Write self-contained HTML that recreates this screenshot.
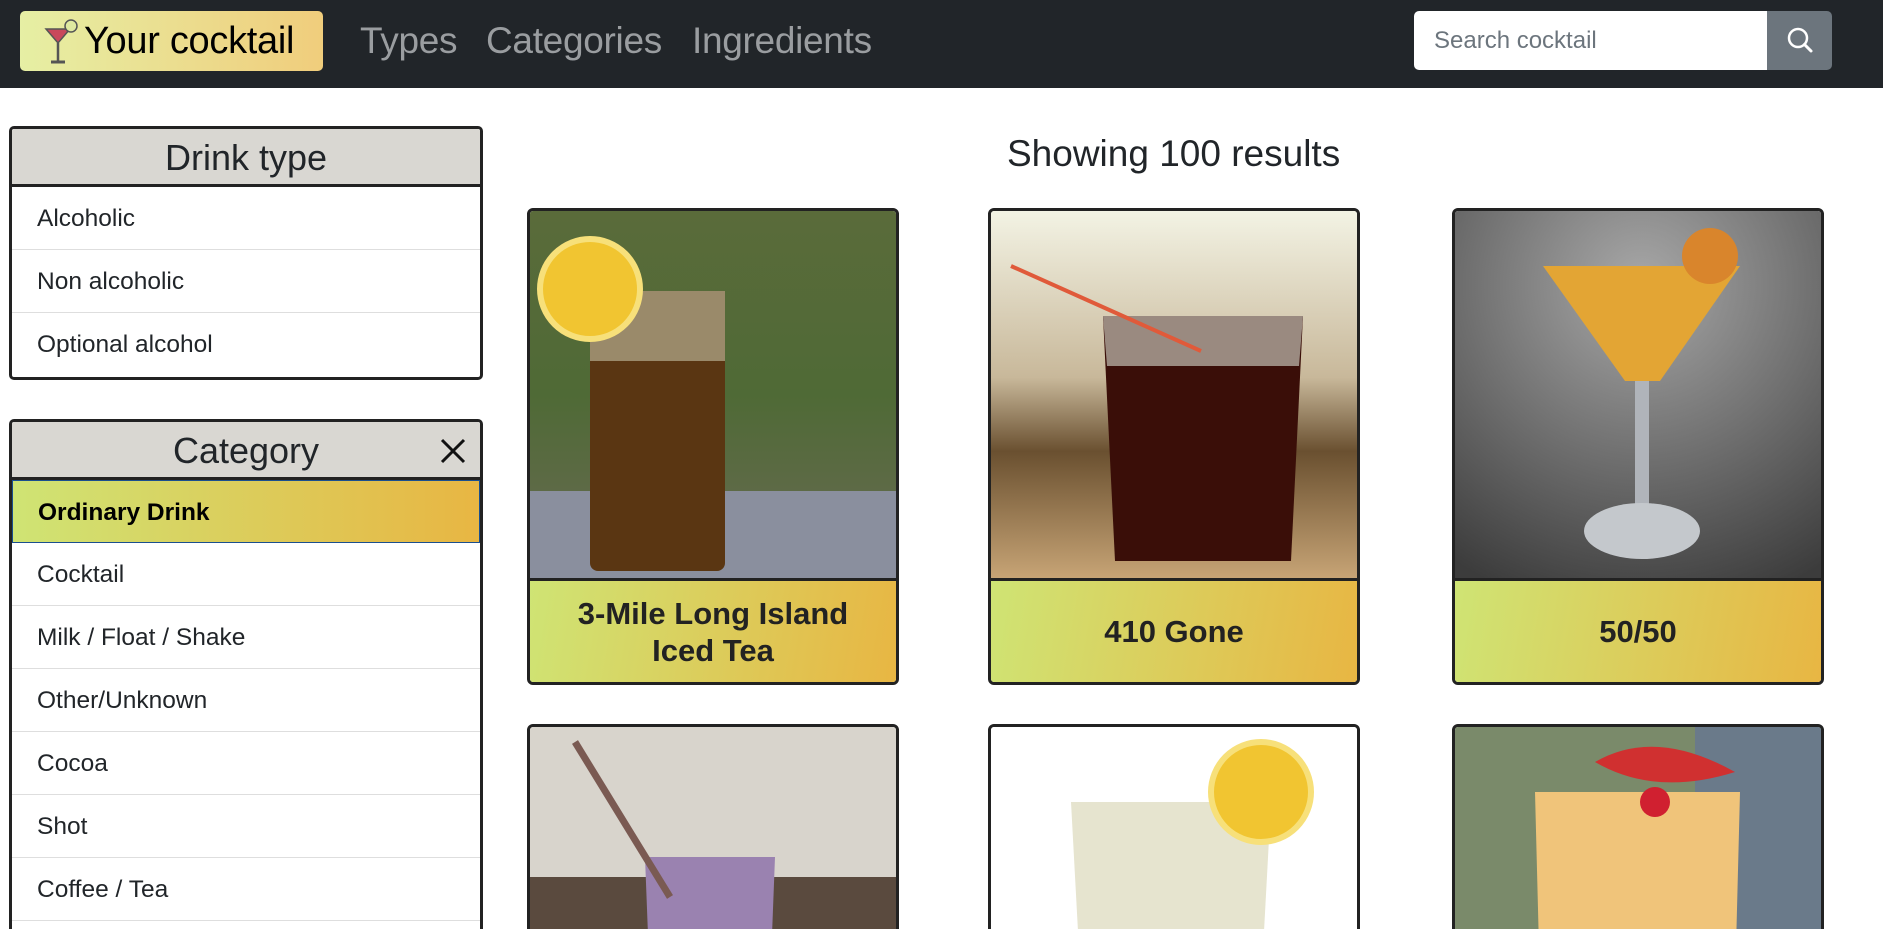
<!DOCTYPE html>
<html style="width:1883px;height:929px;overflow:hidden"><head><meta charset="utf-8"><style>
*{box-sizing:border-box;margin:0;padding:0}
html,body{overflow:hidden}
body{width:1883px;height:929px;overflow:hidden;background:#fff;font-family:"Liberation Sans",Arial,sans-serif;color:#212529;position:relative}
.nav{position:absolute;left:0;top:0;width:1883px;height:88px;background:#212529}
.brand{position:absolute;left:20px;top:11px;width:303px;height:60px;border-radius:5px;background:linear-gradient(90deg,#e6efa4,#f0cd7c);font-size:38px;color:#000;line-height:60px;padding-left:64px;letter-spacing:-0.3px;white-space:nowrap}
.brand svg{position:absolute;left:24px;top:8px}
.nl{position:absolute;top:16px;font-size:37px;color:#9a9da0;line-height:50px;letter-spacing:-0.3px}
.search{position:absolute;left:1414px;top:11px;width:353px;height:59px;background:#fff;border-radius:5px 0 0 5px;font-size:24px;color:#6c757d;line-height:59px;padding-left:20px}
.sbtn{position:absolute;left:1767px;top:11px;width:65px;height:59px;background:#6c757d;border-radius:0 5px 5px 0}
.panel{position:absolute;left:9px;width:474px;border:3px solid #222;border-radius:5px;background:#fff;overflow:hidden}
.ph{height:58px;background:#d9d7d2;border-bottom:3px solid #222;text-align:center;font-size:36px;line-height:58px;position:relative}
.it{height:63px;border-bottom:1px solid #dedede;font-size:24.5px;line-height:63px;padding-left:25px}
.it:last-child{border-bottom:none}
.sel{background:linear-gradient(90deg,#cfe474,#e8b643);font-weight:bold;color:#000;border:1px solid #1a4f8f;height:63px}
.title{position:absolute;left:1007px;top:133px;font-size:37px}
.card{position:absolute;width:372px;border:3px solid #222;border-radius:6px;overflow:hidden;background:#fff}
.img{height:370px;border-bottom:3px solid #222;overflow:hidden}
.band{height:101px;background:linear-gradient(100deg,#cfe474,#e8b643);display:flex;align-items:center;justify-content:center;text-align:center;font-weight:bold;font-size:31px;line-height:37px;color:#222}
</style></head><body>
<div class="nav">
<div class="brand"><svg width="36" height="46" viewBox="0 0 36 46"><path d="M2 10 L26 10 L14 24 Z" fill="#c9485b" stroke="#555" stroke-width="1.5"/><line x1="14" y1="24" x2="14" y2="42" stroke="#555" stroke-width="2.5"/><line x1="7" y1="43" x2="21" y2="43" stroke="#555" stroke-width="3"/><circle cx="27" cy="7" r="6" fill="#dfe9a0" stroke="#555" stroke-width="1.5"/></svg>Your cocktail</div>
<div class="nl" style="left:360px">Types</div>
<div class="nl" style="left:486px">Categories</div>
<div class="nl" style="left:692px">Ingredients</div>
<div class="search">Search cocktail</div>
<div class="sbtn"><svg width="65" height="59" viewBox="0 0 65 59"><circle cx="31" cy="27" r="9" fill="none" stroke="#fff" stroke-width="2.5"/><line x1="37.5" y1="33.5" x2="44" y2="40" stroke="#fff" stroke-width="3" stroke-linecap="round"/></svg></div>
</div>

<div class="panel" style="top:126px;height:254px">
<div class="ph">Drink type</div>
<div class="it">Alcoholic</div>
<div class="it">Non alcoholic</div>
<div class="it">Optional alcohol</div>
</div>

<div class="panel" style="top:419px;height:600px">
<div class="ph">Category<svg style="position:absolute;right:14px;top:16px" width="26" height="26" viewBox="0 0 26 26"><path d="M2 2L24 24M24 2L2 24" stroke="#111" stroke-width="3"/></svg></div>
<div class="it sel">Ordinary Drink</div>
<div class="it">Cocktail</div>
<div class="it">Milk / Float / Shake</div>
<div class="it">Other/Unknown</div>
<div class="it">Cocoa</div>
<div class="it">Shot</div>
<div class="it">Coffee / Tea</div>
<div class="it">Homemade Liqueur</div>
</div>

<div class="title">Showing 100 results</div>

<div class="card" style="left:527px;top:208px;height:477px">
<div class="img"><svg width="372" height="370"><defs><linearGradient id="g1" x1="0" y1="0" x2="0" y2="1"><stop offset="0" stop-color="#5a6b3a"/><stop offset="0.5" stop-color="#4f6a36"/><stop offset="1" stop-color="#6b6a55"/></linearGradient></defs><rect width="372" height="370" fill="url(#g1)"/><rect x="0" y="280" width="372" height="90" fill="#8a8f9e"/><rect x="60" y="80" width="135" height="280" rx="8" fill="#5a3612"/><rect x="60" y="80" width="135" height="70" fill="#9a8a6a"/><circle cx="60" cy="78" r="50" fill="#f1c531" stroke="#f7e07a" stroke-width="6"/></svg></div>
<div class="band">3-Mile Long Island<br>Iced Tea</div></div>

<div class="card" style="left:988px;top:208px;height:477px">
<div class="img"><svg width="372" height="370"><defs><linearGradient id="g2" x1="0" y1="0" x2="0" y2="1"><stop offset="0" stop-color="#f3f3e4"/><stop offset="0.45" stop-color="#c8b89a"/><stop offset="0.65" stop-color="#6a5030"/><stop offset="1" stop-color="#c9a677"/></linearGradient></defs><rect width="372" height="370" fill="url(#g2)"/><path d="M112 105 L312 105 L300 350 L124 350 Z" fill="#3a0e08"/><path d="M112 105 L312 105 L308 155 L116 155 Z" fill="#9a8a80"/><line x1="20" y1="55" x2="210" y2="140" stroke="#e05a3a" stroke-width="4"/></svg></div>
<div class="band">410 Gone</div></div>

<div class="card" style="left:1452px;top:208px;height:477px">
<div class="img"><svg width="372" height="370"><defs><radialGradient id="g3" cx="0.5" cy="0.2" r="0.9"><stop offset="0" stop-color="#a8a8a8"/><stop offset="1" stop-color="#3c3c3c"/></radialGradient></defs><rect width="372" height="370" fill="url(#g3)"/><path d="M88 55 L285 55 L205 170 L170 170 Z" fill="#e3a534"/><rect x="180" y="170" width="14" height="140" fill="#b0b4ba"/><ellipse cx="187" cy="320" rx="58" ry="28" fill="#c4c8cc"/><circle cx="255" cy="45" r="28" fill="#d9852c"/></svg></div>
<div class="band">50/50</div></div>

<div class="card" style="left:527px;top:724px;height:300px">
<div class="img"><svg width="372" height="370"><rect width="372" height="370" fill="#d8d4cc"/><rect x="0" y="150" width="372" height="220" fill="#5a4a3e"/><path d="M115 130 L245 130 L240 260 L120 260 Z" fill="#9a82b0"/><line x1="45" y1="15" x2="140" y2="170" stroke="#7a5a52" stroke-width="7"/></svg></div></div>

<div class="card" style="left:988px;top:724px;height:300px">
<div class="img"><svg width="372" height="370"><rect width="372" height="370" fill="#fff"/><path d="M80 75 L280 75 L270 260 L90 260 Z" fill="#e6e4cf"/><circle cx="270" cy="65" r="50" fill="#f1c531" stroke="#f7e07a" stroke-width="6"/></svg></div></div>

<div class="card" style="left:1452px;top:724px;height:300px">
<div class="img"><svg width="372" height="370"><rect width="372" height="370" fill="#7a8a6a"/><rect x="240" y="0" width="132" height="370" fill="#6a7a8a"/><path d="M80 65 L285 65 L280 260 L85 260 Z" fill="#f0c47a"/><path d="M140 35 Q200 0 280 45 Q200 70 140 35Z" fill="#d03030"/><circle cx="200" cy="75" r="15" fill="#d02030"/></svg></div></div>
</body></html>
